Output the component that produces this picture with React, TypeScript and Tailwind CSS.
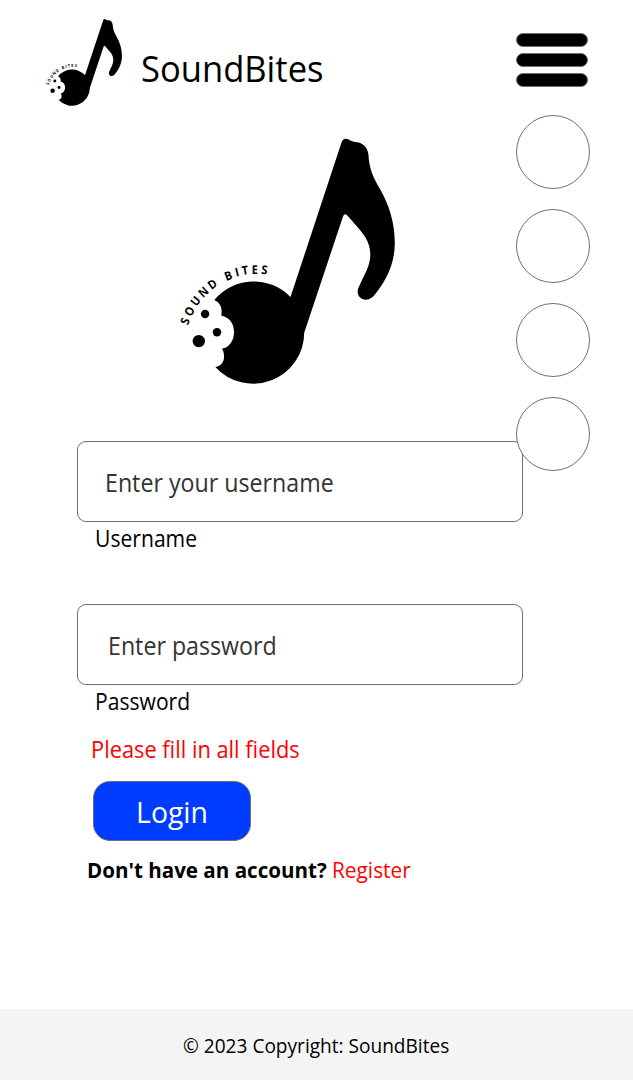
import React from "react";

const ringLetters: [string, number, number, number][] = [
  ["S", 185.2, 321.3, -70],
  ["O", 189.5, 311.3, -60],
  ["U", 195.5, 301, -51],
  ["N", 203.3, 292, -43],
  ["D", 212.3, 284.3, -36],
  ["B", 228.3, 275.7, -20],
  ["I", 237, 272.3, -14],
  ["T", 245.1, 270.3, -9],
  ["E", 254.7, 269.7, -1],
  ["S", 264.5, 270, 6],
];

function Logo({ className }: { className: string }) {
  return (
    <svg viewBox="175 130 225 260" className={className} role="img" aria-label="Sound Bites">
      <path d="M214.3 300A51.2 51.2 0 0 1 290.5 297L341.5 142.5Q343 137.5 347.5 139C352 141.5 354 142 358 142.3C364 143.5 368 149 368.5 155C369 168 373 177 380 189C389 205 394.8 222 394.8 243C394.8 264 386 281 373.5 296.3C364 305 354 296 359 286.5L367 269.5C371.5 259 371.8 248 365.5 237.5C361 230.5 355 224.5 348 216.3Q344.8 212 343 216.5L304.2 332.7A51.1 51.1 0 0 1 215.3 367C221 366 224 362 224 357.3C224 353 223.5 351 222 348.8C229 347.5 234 341 234 332.2C234 323 229.5 317.5 221.3 315.4C222.5 308 220.5 303 214.3 300Z" />
      <circle cx="205.1" cy="314" r="4.2" />
      <circle cx="217" cy="332.2" r="4.2" />
      <circle cx="198.8" cy="341.1" r="6.2" />
      {ringLetters.map(([c, x, y, a], i) => (
        <text
          key={i}
          transform={`translate(${x} ${y}) rotate(${a}) scale(0.92 1)`}
          y="4.2"
          textAnchor="middle"
          className="font-['Open_Sans',sans-serif] text-[12px] font-bold"
        >
          {c}
        </text>
      ))}
    </svg>
  );
}

function Field({ label, placeholder, type, inset }: { label: string; placeholder: string; type: string; inset: string }) {
  return (
    <label className="block">
      <span className={`flex h-[81px] w-[446px] items-center rounded-[9px] border border-[#707070] bg-white ${inset}`}>
        <input
          type={type}
          placeholder={placeholder}
          className="h-10 w-[400px] origin-left scale-x-[0.928] text-[25px] text-black outline-none placeholder:text-[#333333] placeholder:opacity-100"
        />
      </span>
      <span className="ml-[18px] block w-max origin-left scale-x-[0.918] text-[23px] leading-8">{label}</span>
    </label>
  );
}

export default function App() {
  return (
    <div className="relative flex h-[1080px] w-[633px] flex-col overflow-hidden bg-white font-['Open_Sans',sans-serif] text-black">
      <header className="flex h-[130px] shrink-0 items-start">
        <Logo className="mt-[16px] ml-[44px] h-[92px] w-[80px] shrink-0" />
        <h1 className="mt-[44px] ml-[17px] w-[200px] origin-left scale-x-[0.934] text-[37px] leading-[48px] font-normal">SoundBites</h1>
        <button aria-label="Menu" className="mt-[33px] ml-[175px] flex flex-col gap-[6px]">
          {[0, 1, 2].map((i) => (
            <span key={i} className="block h-[14px] w-[72px] rounded-full border border-[#707070] bg-black" />
          ))}
        </button>
      </header>

      <nav className="absolute top-[115px] left-[516px] z-10 flex flex-col gap-5">
        {[0, 1, 2, 3].map((i) => (
          <button key={i} className="size-[74px] rounded-full border border-[#707070] bg-white" />
        ))}
      </nav>

      <main className="flex flex-1 flex-col">
        <Logo className="ml-[175px] h-[260px] w-[225px] shrink-0" />
        <form className="mt-[51px] ml-[77px] flex flex-col items-start">
          <Field label="Username" placeholder="Enter your username" type="text" inset="pl-[27px]" />
          <div className="h-[50px]" />
          <Field label="Password" placeholder="Enter password" type="text" inset="pl-[30px]" />
          <p className="mt-4 ml-[14px] origin-left scale-x-[0.949] text-[23px] leading-8 whitespace-nowrap text-[#ff0000]">
            Please fill in all fields
          </p>
          <button
            type="button"
            className="mt-4 ml-4 flex h-[60px] w-[158px] items-center justify-center rounded-[17px] border border-[#707070] bg-[#003cff] pt-[2px] text-[30px] text-white"
          >
            <span className="block scale-x-[0.945] leading-10">Login</span>
          </button>
          <div className="mt-3 ml-[10px] flex text-[22px] leading-8 whitespace-nowrap">
            <span className="w-[245px] origin-left scale-x-[0.935] font-bold">Don't have an account?</span>
            <a className="origin-left scale-x-[0.947] text-[#ff0000]">Register</a>
          </div>
        </form>
      </main>

      <footer className="flex h-[71px] shrink-0 items-center justify-center bg-[#f4f4f4] pt-[2px]">
        <span className="scale-x-[0.978] text-[19.5px] leading-7 whitespace-nowrap">© 2023 Copyright: SoundBites</span>
      </footer>
    </div>
  );
}
